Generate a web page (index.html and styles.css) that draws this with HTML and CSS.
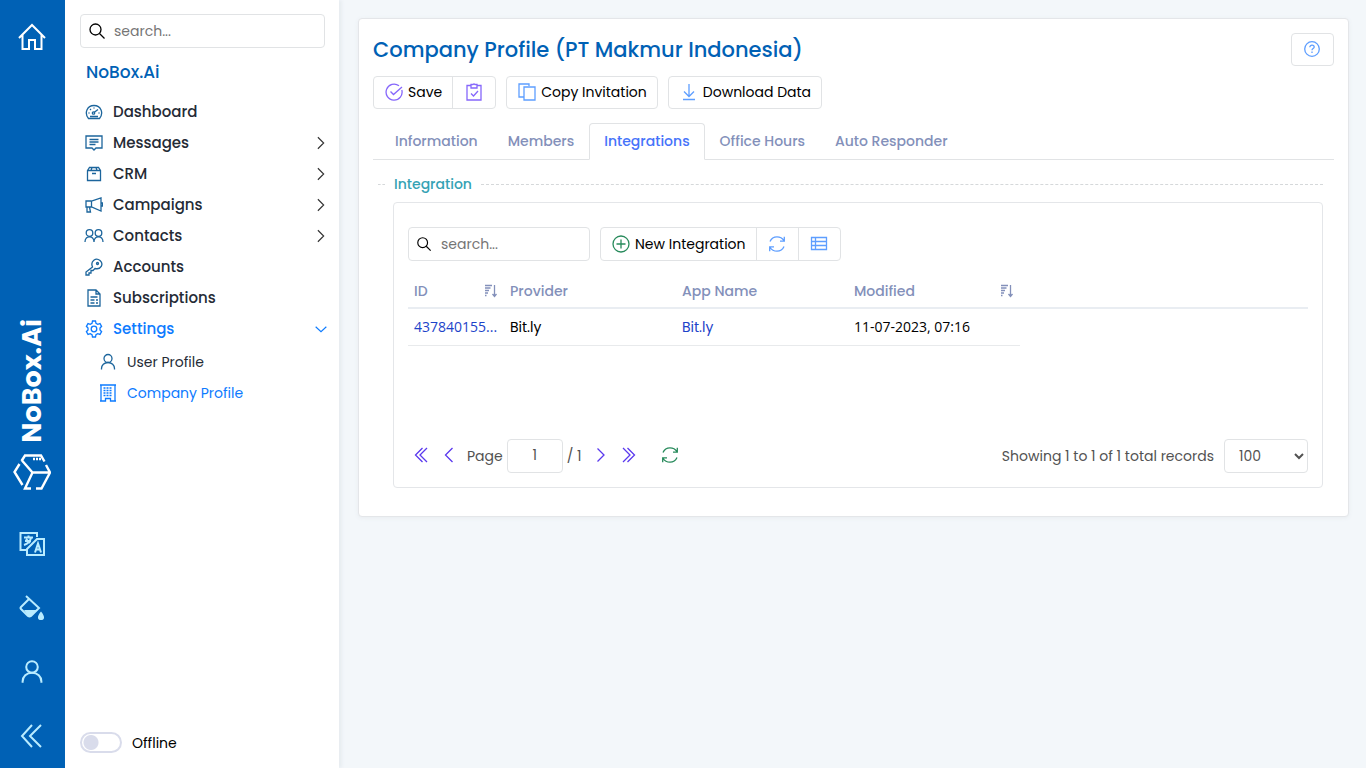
FILE: index.html
```html
<!DOCTYPE html>
<html lang="en">
<head>
<meta charset="utf-8">
<meta name="viewport" content="width=device-width, initial-scale=1">
<title>Company Profile - NoBox.Ai</title>
<link rel="stylesheet" href="styles.css">
</head>
<body>
<svg class="sprite" aria-hidden="true">
  <symbol id="search" viewBox="0 0 18 18"><circle cx="7.500" cy="7.500" r="5.500"/><path d="M11.500 11.500 16.500 16.500"/></symbol>
  <symbol id="right" viewBox="0 0 18 18"><path d="M5.500 2.500 12 9 5.500 15.500"/></symbol>
  <symbol id="left" viewBox="0 0 18 18"><path d="M12.500 2 5.500 9l7 7"/></symbol>
  <symbol id="down" viewBox="0 0 18 18"><path d="M3 6.500 9 12l6-5.500"/></symbol>
  <symbol id="first" viewBox="0 0 18 18"><path d="M10.500 2 3.500 9l7 7M15 2 8 9l7 7"/></symbol>
  <symbol id="last" viewBox="0 0 18 18"><path d="M3 2l7 7-7 7M7.500 2l7 7-7 7"/></symbol>
  <symbol id="user" viewBox="0 0 18 18"><circle cx="9" cy="5.500" r="4"/><path d="M2.500 16.500v-1c0-3.200 2.700-6 6.500-6s6.500 2.800 6.500 6v1"/></symbol>
  <symbol id="refresh" viewBox="0 0 18 18"><path d="M2 6.500C3.300 3.500 5.800 1.800 9 1.800c3 0 5.400 1.300 6.900 3.700M16.300 1.800v4.400H12M16 11.500c-1.300 3-3.800 4.700-7 4.700-3 0-5.400-1.300-6.900-3.700M1.700 16.200v-4.400H6"/></symbol>
  <symbol id="sort" viewBox="0 0 14 14"><path d="M1 1.500h7M1 4h5.500M1 6.500h4M1 9h3M1 11.500h1.500M10.500 1v11M8.500 10l2 2.500 2-2.500"/></symbol>
</svg>
<div class="app">
  <nav class="rail" aria-label="Quick links">
    <a class="rail__link rail__link--home" href="#" aria-label="Home"><svg class="icon icon--28" viewBox="0 0 28 28"><path d="M1 15 14 2l13 13M4.500 12v14h6.500v-9h6v9h6.500V12"/></svg></a>
    <a class="brand" href="#">
      <span class="brand__name">NoBox.Ai</span>
      <svg class="icon icon--38" viewBox="0 0 38 38"><path d="M6.500 11 1.500 19l8 13M8.500 8 12 2.500h16l3.500 6M9 7.500l10.500 12H36M19.500 19.500 12 35.500h6M23 35.500h5.500L37 19.500 33 12M20 6h2m1 0h2m1 0h2"/></svg>
    </a>
    <div class="rail__tools">
      <a class="rail__link" href="#" aria-label="Language"><svg class="icon icon--26" viewBox="0 0 26 26"><path d="M18 6V2H1.500v17H7M8 18 18 8h7v16H8z"/><path d="M5 6.500h9M9.500 4.500v2M6 10h6M12 7c-1 4-4 6-7 7M7 8l4 4M16 21.500l3-9 3 9M17 18.500h4"/></svg></a>
      <a class="rail__link" href="#" aria-label="Theme"><svg class="icon icon--26" viewBox="0 0 26 26"><path d="M7 1l13 12-8 8q-1.500 1-3 0l-7-7q-1-1 0-2l8-8"/><path class="solid" d="M5 15h13l-6 6q-1.500 1-3 0zM22 16.500c5 6 3 8.500 0 8.500s-5-2.500 0-8.500z"/></svg></a>
      <a class="rail__link" href="#" aria-label="Account"><svg class="icon icon--26"><use href="#user"/></svg></a>
      <a class="rail__link" href="#" aria-label="Collapse"><svg class="icon icon--26" viewBox="0 0 26 26"><path d="M13 2 3 13l10 11M22 2 11 13l11 11"/></svg></a>
    </div>
  </nav>

  <aside class="sidebar">
    <label class="search">
      <svg class="icon icon--18"><use href="#search"/></svg>
      <input class="search__input" type="text" placeholder="search..." aria-label="Search menu">
    </label>
    <h2 class="sidebar__title">NoBox.Ai</h2>
    <ul class="menu">
      <li><a class="menu__link" href="#"><svg class="icon icon--18" viewBox="0 0 18 18"><path d="M3.500 15.500C-1 10 2 2.500 9 2.500s10 7.500 5.500 13zM9 9.500l4-3M3.500 10h1M5 6l1 1M9 4.500v1M13.500 10h1M5 13.500h8"/><circle cx="8.500" cy="10" r="1.200"/></svg><span>Dashboard</span></a></li>
      <li><a class="menu__link" href="#"><svg class="icon icon--18" viewBox="0 0 18 18"><path d="M1 2h16v12h-6l-2 2-2-2H1zM4.500 5.500h9M4.500 8h9M4.500 10.500h6"/></svg><span>Messages</span><svg class="icon icon--16 menu__arrow"><use href="#right"/></svg></a></li>
      <li><a class="menu__link" href="#"><svg class="icon icon--18" viewBox="0 0 18 18"><path d="M2.500 5.500 4.500 2.500h9l2 3V15.500h-13zM2.500 5.500h13M7 2.500l-1 3M11 2.500l1 3M7 8.500h4"/></svg><span>CRM</span><svg class="icon icon--16 menu__arrow"><use href="#right"/></svg></a></li>
      <li><a class="menu__link" href="#"><svg class="icon icon--18" viewBox="0 0 18 18"><path d="M1 5h5.500L16 2v13l-9.500-4H1zM6.500 5v6M2 11v5h3.500l-1-5M16 7h1.500v3H16"/></svg><span>Campaigns</span><svg class="icon icon--16 menu__arrow"><use href="#right"/></svg></a></li>
      <li><a class="menu__link" href="#"><svg class="icon icon--20" viewBox="0 0 20 18"><circle cx="5.500" cy="6" r="3.300"/><circle cx="14.500" cy="6" r="3.300"/><path d="M1 15c0-7 9-7 9 0 0-7 9-7 9 0"/></svg><span>Contacts</span><svg class="icon icon--16 menu__arrow"><use href="#right"/></svg></a></li>
      <li><a class="menu__link" href="#"><svg class="icon icon--18" viewBox="0 0 18 18"><path d="M7.500 9C5 3 11-1 15 2.500s1 9.500-5 8L8 12.500H6V15H4v2H1v-3z"/><circle cx="12.500" cy="5.500" r="1"/></svg><span>Accounts</span></a></li>
      <li><a class="menu__link" href="#"><svg class="icon icon--18" viewBox="0 0 18 18"><path d="M3 1h8l4 4v12H3zM11 1v4h4M5.500 8h7M5.500 11h4m1.500 0h2M5.500 14h4m1.500 0h2"/></svg><span>Subscriptions</span></a></li>
      <li><a class="menu__link menu__link--active" href="#"><svg class="icon icon--18" viewBox="0 0 18 18"><path d="M7.500 1h3l.5 2.300 1.700 1L15 3.600l1.600 2.700L15 8v2l1.600 1.700-1.600 2.700-2.300-.7-1.700 1-.5 2.300h-3L7 14.700l-1.700-1-2.300.7-1.600-2.700L3 10V8L1.400 6.300 3 3.600l2.300.7 1.700-1z"/><circle cx="9" cy="9" r="2.800"/></svg><span>Settings</span><svg class="icon icon--16 menu__arrow"><use href="#down"/></svg></a>
        <ul class="menu menu--sub">
          <li><a class="menu__link" href="#"><svg class="icon icon--18"><use href="#user"/></svg><span>User Profile</span></a></li>
          <li><a class="menu__link menu__link--active" href="#" aria-current="page"><svg class="icon icon--18" viewBox="0 0 18 18"><path d="M1 1h16M2 1v16h4.500v-2.500h5V17H16V1M1 17h6M11 17h6"/><path stroke-dasharray="2 1" d="M4.500 4h9M4.500 6.500h9M4.500 9h9M4.500 11.500h9"/></svg><span>Company Profile</span></a></li>
        </ul>
      </li>
    </ul>
    <label class="status"><input class="status__switch" type="checkbox" role="switch"><span>Offline</span></label>
  </aside>

  <main class="main">
    <section class="card">
      <header class="card__head">
        <h1 class="card__title">Company Profile (PT Makmur Indonesia)</h1>
        <button class="btn btn--icon btn--single blue" type="button" aria-label="Help"><svg class="icon icon--18" viewBox="0 0 18 18"><circle cx="9" cy="9" r="7.300"/><path d="M6.800 7.300c0-3 4.400-2.700 4.400-.3 0 1.500-2.200 1.500-2.200 3.200M9 11.500V13"/></svg></button>
      </header>
      <div class="toolbar">
        <div class="group">
          <button class="btn" type="button"><svg class="icon icon--18 violet" viewBox="0 0 18 18"><path d="M16.800 7A8 8 0 1 1 14 2.800M5.500 8.500l3 3L17 4"/></svg>Save</button>
          <button class="btn btn--icon violet" type="button" aria-label="Apply changes"><svg class="icon icon--18" viewBox="0 0 18 18"><path d="M6 2.500H2V17h14V2.500h-4M6 1.500h2q1-1 2 0h2V5H6zM6 10.500l2.500 2.500L13 8"/></svg></button>
        </div>
        <div class="group"><button class="btn" type="button"><svg class="icon icon--18 blue" viewBox="0 0 18 18"><path d="M6 14H1V1h10v2M6 4h11v13H6z"/></svg>Copy Invitation</button></div>
        <div class="group"><button class="btn" type="button"><svg class="icon icon--18 blue" viewBox="0 0 18 18"><path d="M9 1v12M4 8.500l5 5 5-5M3 16.500h12"/></svg>Download Data</button></div>
      </div>
      <nav class="tabs" aria-label="Sections">
        <a class="tabs__link" href="#">Information</a>
        <a class="tabs__link" href="#">Members</a>
        <a class="tabs__link tabs__link--active" href="#" aria-current="page">Integrations</a>
        <a class="tabs__link" href="#">Office Hours</a>
        <a class="tabs__link" href="#">Auto Responder</a>
      </nav>
      <div class="pane">
        <h2 class="section-title">Integration</h2>
        <div class="panel">
          <div class="toolbar">
            <label class="search search--grid">
              <svg class="icon icon--16"><use href="#search"/></svg>
              <input class="search__input" type="text" placeholder="search..." aria-label="Search integrations">
            </label>
            <div class="group">
              <button class="btn btn--tall" type="button"><svg class="icon icon--18 green" viewBox="0 0 18 18"><circle cx="9" cy="9" r="8"/><path d="M9 4.500v9M4.500 9h9"/></svg>New Integration</button>
              <button class="btn btn--icon btn--tall blue" type="button" aria-label="Refresh"><svg class="icon icon--18"><use href="#refresh"/></svg></button>
              <button class="btn btn--icon btn--tall blue" type="button" aria-label="Column picker"><svg class="icon icon--18" viewBox="0 0 18 18"><path d="M1.500 2.500h15v12h-15zM1.500 6.500h15M1.500 10.500h15M5.500 2.500v12"/></svg></button>
            </div>
          </div>
          <table class="grid">
            <colgroup><col class="col-id"><col class="col-text"><col class="col-text"><col class="col-text"><col></colgroup>
            <thead><tr>
              <th><div class="grid__head">ID<svg class="icon icon--14"><use href="#sort"/></svg></div></th>
              <th>Provider</th>
              <th>App Name</th>
              <th><div class="grid__head">Modified<svg class="icon icon--14"><use href="#sort"/></svg></div></th>
              <th></th>
            </tr></thead>
            <tbody><tr>
              <td class="grid__num"><a href="#">437840155...</a></td>
              <td>Bit.ly</td>
              <td><a href="#">Bit.ly</a></td>
              <td class="grid__num">11-07-2023, 07:16</td>
              <td class="grid__rest"></td>
            </tr></tbody>
          </table>
          <div class="pager">
            <button class="pager__btn" type="button" aria-label="First page"><svg class="icon icon--18"><use href="#first"/></svg></button>
            <button class="pager__btn" type="button" aria-label="Previous page"><svg class="icon icon--18"><use href="#left"/></svg></button>
            <label class="pager__page">Page <input class="pager__input" type="text" value="1"></label>
            <span class="pager__total">/ 1</span>
            <button class="pager__btn" type="button" aria-label="Next page"><svg class="icon icon--18"><use href="#right"/></svg></button>
            <button class="pager__btn" type="button" aria-label="Last page"><svg class="icon icon--18"><use href="#last"/></svg></button>
            <button class="pager__btn pager__btn--reload" type="button" aria-label="Reload"><svg class="icon icon--18"><use href="#refresh"/></svg></button>
            <span class="pager__stat">Showing 1 to 1 of 1 total records</span>
            <select class="pager__size" aria-label="Records per page"><option>100</option><option>500</option></select>
          </div>
        </div>
      </div>
    </section>
  </main>
</div>
</body>
</html>
```
FILE: styles.css
```css
* { box-sizing: border-box; }
body { margin: 0; background: #f3f7fa; color: #000; font: 14px/20px Poppins, Inter, sans-serif; }
a { color: inherit; text-decoration: none; }
button, input, select { font: inherit; color: inherit; }
h1, h2 { margin: 0; font-weight: 500; }
ul { margin: 0; padding: 0; list-style: none; }

.sprite { display: none; }
.icon { flex: none; width: 18px; height: 18px; fill: none; stroke: currentColor; stroke-width: 1.3; }
.icon .solid { fill: currentColor; stroke: none; }
.icon--14 { width: 14px; height: 14px; }
.icon--16 { width: 16px; height: 16px; }
.icon--20 { width: 20px; }
.icon--26 { width: 26px; height: 26px; }
.icon--28 { width: 28px; height: 28px; stroke-width: 2; }
.icon--38 { width: 38px; height: 38px; stroke-width: 2.4; }
.blue { color: #5e9eff; }
.violet { color: #8667fb; }
.green { color: #278a5b; }

.app { display: flex; min-height: 100vh; }

.rail { display: flex; flex-direction: column; align-items: center; justify-content: space-between; width: 65px; padding: 23px 1px 19px 0; background: #0061b5; color: #b9ecff; }
.rail__link { display: flex; }
.rail__link--home { color: #fff; }
.rail__tools { display: flex; flex-direction: column; gap: 38px; }
.rail__tools .icon { stroke-width: 2; }
.rail__tools use { stroke-width: 1.4; }
.brand { display: flex; flex-direction: column; align-items: center; gap: 10px; margin: auto 0 40px; color: #fff; }
.brand__name { writing-mode: vertical-rl; transform: rotate(180deg); font-size: 27px; line-height: 32px; font-weight: 700; }

.sidebar { display: flex; flex-direction: column; width: 274px; padding: 14px 14px 15px 15px; background: #fff; box-shadow: 3px 0 3px #e8edf1; }
.search { display: flex; align-items: center; gap: 8px; height: 34px; padding: 0 8px 1px 7px; border: 1px solid #e1e3e5; border-radius: 4px; }
.search__input { flex: 1; min-width: 0; padding: 0; border: 0; outline: 0; background: none; }
.search__input::placeholder { color: #757575; opacity: 1; }
.search--grid { width: 182px; gap: 9px; }
.sidebar__title { margin: 12px 6px; color: #0061b5; font-size: 17px; line-height: 24px; }
.menu__link { display: flex; align-items: center; gap: 10px; height: 31px; padding: 0 0 0 5px; color: #252b36; font-size: 15px; font-weight: 500; }
.menu__link .icon { color: #1c659c; }
.menu__link .icon--20 { margin: 0 -1px; }
.menu__link .menu__arrow { margin: 0 -4px 0 auto; color: #333; }
.menu__link--active, .menu__link--active .icon, .menu__link--active .menu__arrow { color: #0d7bff; }
.menu--sub { padding: 2px 0 0 14px; }
.menu--sub .menu__link { font-size: 14px; font-weight: 400; }
.status { display: flex; align-items: center; gap: 10px; margin-top: auto; }
.status__switch { appearance: none; width: 42px; height: 21px; margin: 0; border: 2px solid #d9dceb; border-radius: 11px; background: radial-gradient(circle at 9px 50%, #d9dceb 7px, #fff 8px); }

.main { flex: 1; min-width: 0; padding: 18px 17px 18px 19px; }
.card { padding: 14px 14px 28px; border: 1px solid #e4e6e9; border-radius: 4px; background: #fff; box-shadow: 0 1px 4px #e8ecf0; }
.card__head { display: flex; align-items: center; justify-content: space-between; }
.card__title { color: #0061b5; font-size: 21px; line-height: 32px; }
.toolbar { display: flex; gap: 10px; }
.card__head + .toolbar { margin: 10px 0 14px; }
.group { display: flex; border: 1px solid #e1e3e5; border-radius: 4px; }
.btn { display: flex; align-items: center; gap: 5px; height: 31px; padding: 0 10px 1px 11px; border: 0; background: none; white-space: nowrap; }
.btn + .btn { border-left: 1px solid #e1e3e5; }
.btn--icon { justify-content: center; width: 43px; padding: 0 1px 1px 0; }
.btn--single { height: 33px; border: 1px solid #e1e3e5; border-radius: 4px; }
.btn--tall { height: 32px; }
.btn--tall.btn--icon { width: 42px; }

.tabs { display: flex; padding-left: 7px; border-bottom: 1px solid #e1e3e5; color: #8390ba; font-weight: 500; }
.tabs__link { margin-bottom: -1px; padding: 7px 14px 8px; border: 1px solid transparent; border-radius: 4px 4px 0 0; line-height: 20px; }
.tabs__link--active { border-color: #e1e3e5; border-bottom-color: #fff; background: #fff; color: #4673fa; }
.pane { padding: 14px 11px 0 5px; }
.section-title { display: flex; align-items: center; gap: 9px; color: #35a2b4; font-size: 14px; line-height: 20px; }
.section-title::before, .section-title::after { content: ""; width: 7px; border-top: 1px dashed #d5d8da; }
.section-title::after { flex: 1; }
.panel { margin: 8px 0 0 15px; padding: 24px 14px 14px; border: 1px solid #e4e6e9; border-radius: 4px; }

.grid { width: 100%; margin-top: 13px; border-collapse: collapse; table-layout: fixed; }
.col-id { width: 96px; }
.col-text { width: 172px; }
.grid th { height: 34px; padding: 0 6px; border-bottom: 2px solid #e9edf2; color: #8390ba; font-weight: 500; text-align: left; }
.grid__head { display: flex; align-items: center; justify-content: space-between; }
.grid td { height: 37px; padding: 0 6px; border-bottom: 1px solid #e8eaec; white-space: nowrap; }
.grid a { color: #1d43c9; }
.grid .grid__num { font-family: "Open Sans", sans-serif; }
.grid .grid__rest { border: 0; }

.pager { display: flex; align-items: center; margin-top: 93px; color: #525252; }
.pager__btn { display: flex; padding: 0 5px 2px; border: 0; background: none; color: #5a39ee; }
.pager__btn:first-child { padding-left: 4px; }
.pager__btn--reload { margin-left: 13px; color: #278a5b; }
.pager__page { display: flex; align-items: center; gap: 4px; padding-left: 4px; }
.pager__input { width: 56px; height: 34px; padding: 0; border: 1px solid #e1e3e5; border-radius: 4px; text-align: center; }
.pager__total { padding: 0 5px 0 4px; }
.pager__stat { margin-left: auto; padding-right: 10px; }
.pager__size { width: 84px; height: 34px; padding: 0 0 0 10px; border: 1px solid #e1e3e5; border-radius: 4px; background: #fff; }
```
